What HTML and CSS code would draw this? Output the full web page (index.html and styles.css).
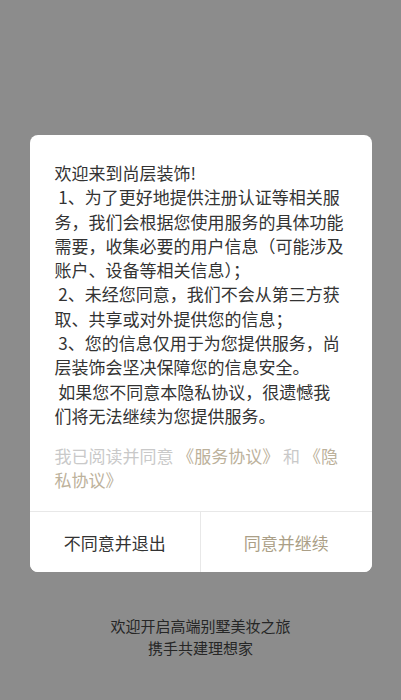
FILE: index.html
```html
<!DOCTYPE html>
<html lang="zh-CN">
<head>
    <meta charset="UTF-8">
    <meta name="viewport" content="width=device-width, initial-scale=1.0">
    <title>尚层装饰</title>
    <link rel="stylesheet" href="styles.css">
</head>
<body>

    <div class="screen">
        <div class="dialog">
            <div class="dialog-body">
                <p class="notice">欢迎来到尚层装饰!
 1、为了更好地提供注册认证等相关服务，我们会根据您使用服务的具体功能需要，收集必要的用户信息（可能涉及账户、设备等相关信息）；
 2、未经您同意，我们不会从第三方获取、共享或对外提供您的信息；
 3、您的信息仅用于为您提供服务，尚层装饰会坚决保障您的信息安全。
 如果您不同意本隐私协议，很遗憾我们将无法继续为您提供服务。</p>
                <p class="agree">我已阅读并同意 <a href="#" class="link">《服务协议》</a> 和 <a href="#" class="link">《隐私协议》</a></p>
            </div>
            <div class="dialog-actions">
                <button class="btn btn-cancel">不同意并退出</button>
                <button class="btn btn-ok">同意并继续</button>
            </div>
        </div>

        <div class="slogan">
            <p>欢迎开启高端别墅美妆之旅</p>
            <p>携手共建理想家</p>
        </div>
    </div>

</body>
</html>
```

FILE: styles.css
```css
html, body {
    margin: 0;
    padding: 0;
}

body {
    font-family: "Noto Sans CJK SC", "Noto Sans", sans-serif;
    background-color: #8c8c8c;
    color: #333;
}

.screen {
    height: 700px;
    display: flex;
    flex-direction: column;
    align-items: center;
    padding-top: 135px;
    box-sizing: border-box;
}

.dialog {
    width: 342px;
    background-color: #fff;
    border-radius: 8px;
    overflow: hidden;
}

.dialog-body {
    padding: 26px 27px 19px 25px;
}

.notice {
    margin: 0;
    font-size: 17px;
    line-height: 24.3px;
    white-space: pre-wrap;
    color: #333;
}

.agree {
    margin: 16px 0 0;
    font-size: 17px;
    line-height: 24px;
    color: #c9c9c9;
}

.link {
    color: #bcb19b;
    text-decoration: none;
}

.dialog-actions {
    display: flex;
    border-top: 1px solid #e8e8e8;
}

.btn {
    flex: 1;
    height: 60px;
    border: none;
    background: #fff;
    font-family: inherit;
    font-size: 17px;
    color: #333;
    padding: 0;
    cursor: pointer;
}

.btn-ok {
    border-left: 1px solid #e8e8e8;
    color: #ab9f87;
}

.slogan {
    margin-top: 43px;
    text-align: center;
    font-size: 15px;
    line-height: 22px;
    color: #262626;
}

.slogan p {
    margin: 0;
}
```
